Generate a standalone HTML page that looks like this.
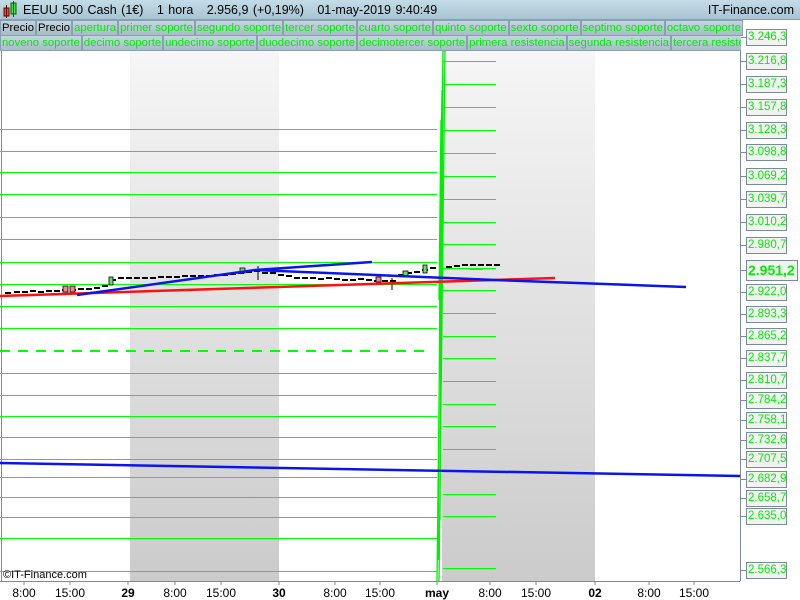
<!DOCTYPE html>
<html><head><meta charset="utf-8"><style>
*{margin:0;padding:0;box-sizing:border-box}
body{width:800px;height:600px;overflow:hidden;background:#fff;font-family:"Liberation Sans",sans-serif;position:relative}
#hdr{position:absolute;left:0;top:0;width:800px;height:20px;background:linear-gradient(#c4dce8,#a8c4d2);border-bottom:1px solid #8aa0ae}
#hdr .t{position:absolute;left:23px;top:3px;font-size:12.5px;color:#000;word-spacing:1px}
#hdr .r{position:absolute;right:6px;top:3px;font-size:12.5px}
.row{position:absolute;left:0;height:16px;display:flex;background:#a4bac6}
.row span{font-size:11.3px;color:#00ee00;padding:0 1px;border:1px solid #8aa0ae;background:linear-gradient(#c2d6e0,#a8bcc8);line-height:14px;white-space:nowrap}
.row span.k{color:#000}
.lb{position:absolute;left:746px;width:41px;height:17px;border:1px solid #7a8a99;background:#f2f2f2;color:#00ee00;font-size:11.5px;line-height:15px;text-align:left;padding-left:1px}
.h{position:absolute;height:1px;background:#00ff00}
</style></head><body>
<svg width="800" height="600" style="position:absolute;left:0;top:0">
<defs>
<linearGradient id="g" x1="0" y1="0" x2="0" y2="1"><stop offset="0" stop-color="#f6f6f6"/><stop offset="1" stop-color="#cbcbcb"/></linearGradient>
</defs>
<rect x="130" y="50" width="149" height="531" fill="url(#g)"/>
<rect x="442" y="50" width="153" height="531" fill="url(#g)"/>
<rect x="1" y="50" width="1" height="531" fill="#7a8a99"/>
<rect x="740" y="50" width="1" height="531" fill="#7a8a99"/>
<rect x="0" y="581" width="740" height="1" fill="#7a8a99"/>
<g fill="#00ff00">
<rect x="0" y="129" width="437" height="1"/><rect x="0" y="151" width="437" height="1"/><rect x="0" y="172" width="437" height="1"/><rect x="0" y="194" width="437" height="1"/><rect x="0" y="217" width="437" height="1"/><rect x="0" y="239" width="437" height="1"/><rect x="0" y="262" width="437" height="1"/><rect x="0" y="284" width="437" height="1"/><rect x="0" y="306" width="437" height="1"/><rect x="0" y="328" width="437" height="1"/><rect x="0" y="373" width="437" height="1"/><rect x="0" y="395" width="437" height="1"/><rect x="0" y="416" width="437" height="1"/><rect x="0" y="437" width="437" height="1"/><rect x="0" y="459" width="437" height="1"/><rect x="0" y="477" width="437" height="1"/><rect x="0" y="497" width="437" height="1"/><rect x="0" y="517" width="437" height="1"/><rect x="0" y="538" width="437" height="1"/><rect x="0" y="571" width="437" height="1"/>
<rect x="443" y="61" width="53" height="1"/><rect x="443" y="84" width="53" height="1"/><rect x="443" y="107" width="53" height="1"/><rect x="443" y="130" width="53" height="1"/><rect x="443" y="153" width="53" height="1"/><rect x="443" y="176" width="53" height="1"/><rect x="443" y="199" width="53" height="1"/><rect x="443" y="222" width="53" height="1"/><rect x="443" y="244" width="53" height="1"/><rect x="443" y="268" width="53" height="1"/><rect x="443" y="290" width="53" height="1"/><rect x="443" y="313" width="53" height="1"/><rect x="443" y="336" width="53" height="1"/><rect x="443" y="358" width="53" height="1"/><rect x="443" y="381" width="53" height="1"/><rect x="443" y="404" width="53" height="1"/><rect x="443" y="426" width="53" height="1"/><rect x="443" y="449" width="53" height="1"/><rect x="443" y="471" width="53" height="1"/><rect x="443" y="494" width="53" height="1"/><rect x="443" y="516" width="53" height="1"/><rect x="443" y="568" width="53" height="1"/>
<rect x="470" y="268" width="13" height="2"/>
</g>
<path d="M0 351H430" stroke="#00ff00" stroke-dasharray="10,8" stroke-width="2"/>
<g stroke="#00ee00" stroke-width="1.3" fill="none">
<path d="M437 581L443 50M439 581L445 50M438 560L441 120L439 300L442 90L440 520L443 60"/>
</g>
<g stroke="#000" stroke-width="2">
<path d="M5 293h6M14 292h6M22 292h6M30 291h6M38 292h6M46 291h6M54 291h6M62 290h6M70 290h6M78 289h6M86 289h6M94 288h6M102 286h6M110 280h6M118 278h6M126 278h6M134 278h6M142 278h6M150 278h6M158 277h6M166 277h6M174 277h6M182 276h6M190 276h6M198 276h6M206 276h6M214 275h6M222 275h6M230 274h6M238 273h6M246 272h6M254 271h6M262 273h6M270 273h6M278 275h6M286 276h6M294 278h6M302 278h6M310 278h6M318 279h6M326 278h6M334 279h6M342 280h6M350 280h6M358 279h6M366 280h6M374 281h6M382 281h6M390 281h6M398 275h6M406 273h6M414 272h6M422 270h6M430 268h6M446 267h6M454 266h6M462 265h6M470 265h6M478 265h6M486 265h6M494 265h6"/>
<path d="M392 278v12M258 266v14" stroke-width="1"/>
</g>
<g stroke="#000" stroke-width="0.8">
<rect x="63" y="286" width="5" height="6" fill="#e88"/><rect x="70" y="286" width="5" height="6" fill="#e88"/><rect x="109" y="277" width="4" height="8" fill="#6d6"/>
<rect x="240" y="268" width="5" height="5" fill="#6d6"/><rect x="376" y="277" width="5" height="5" fill="#e88"/><rect x="403" y="271" width="5" height="6" fill="#6d6"/><rect x="423" y="265" width="4" height="8" fill="#6d6"/>
</g>
<path d="M0 296L555 278" stroke="#ff1010" stroke-width="2.5"/>
<path d="M77 295L255 270L372 262L255 270L495 280L686 287" stroke="#0a14ee" stroke-width="2.5" fill="none"/>
<path d="M0 463L740 476" stroke="#0a14ee" stroke-width="2.5"/>
<g fill="#7a8a99"><rect x="741" y="37" width="5" height="1"/><rect x="741" y="61" width="5" height="1"/><rect x="741" y="84" width="5" height="1"/><rect x="741" y="107" width="5" height="1"/><rect x="741" y="130" width="5" height="1"/><rect x="741" y="152" width="5" height="1"/><rect x="741" y="176" width="5" height="1"/><rect x="741" y="199" width="5" height="1"/><rect x="741" y="222" width="5" height="1"/><rect x="741" y="245" width="5" height="1"/><rect x="741" y="270" width="5" height="1"/><rect x="741" y="292" width="5" height="1"/><rect x="741" y="314" width="5" height="1"/><rect x="741" y="336" width="5" height="1"/><rect x="741" y="358" width="5" height="1"/><rect x="741" y="380" width="5" height="1"/><rect x="741" y="400" width="5" height="1"/><rect x="741" y="420" width="5" height="1"/><rect x="741" y="440" width="5" height="1"/><rect x="741" y="459" width="5" height="1"/><rect x="741" y="479" width="5" height="1"/><rect x="741" y="498" width="5" height="1"/><rect x="741" y="516" width="5" height="1"/><rect x="741" y="570" width="5" height="1"/></g>
<g stroke="#7a8a99"><path d="M24 581v4M70 581v4M128 581v4M175 581v4M221 581v4M279 581v4M335 581v4M380 581v4M437 581v4M490 581v4M536 581v4M595 581v4M649 581v4M694 581v4"/></g>
<g font-size="12" font-family="Liberation Sans,sans-serif" text-anchor="middle" fill="#000">
<text x="24" y="597">8:00</text><text x="70" y="597">15:00</text><text x="128" y="597" font-weight="bold">29</text><text x="175" y="597">8:00</text><text x="221" y="597">15:00</text><text x="279" y="597" font-weight="bold">30</text><text x="335" y="597">8:00</text><text x="380" y="597">15:00</text><text x="437" y="597" font-weight="bold">may</text><text x="490" y="597">8:00</text><text x="536" y="597">15:00</text><text x="595" y="597" font-weight="bold">02</text><text x="649" y="597">8:00</text><text x="694" y="597">15:00</text>
</g>
<text x="3" y="578" font-size="11" fill="#000">©IT-Finance.com</text>
</svg>
<div id="hdr"><div class="t">EEUU 500 Cash (1€) &nbsp; 1 hora &nbsp; 2.956,9 (+0,19%) &nbsp; 01-may-2019 9:40:49</div><div class="r">IT-Finance.com</div></div>
<svg width="20" height="20" style="position:absolute;left:0;top:0"><rect x="4" y="8" width="5" height="8" fill="#e44" stroke="#600"/><line x1="6.5" y1="5" x2="6.5" y2="18" stroke="#600"/><rect x="11" y="3" width="5" height="11" fill="#4d4" stroke="#060"/><line x1="13.5" y1="1" x2="13.5" y2="17" stroke="#060"/></svg>
<div class="row" style="top:20px;width:740px"><span class="k">Precio</span><span class="k">Precio</span><span>apertura</span><span>primer soporte</span><span>segundo soporte</span><span>tercer soporte</span><span>cuarto soporte</span><span>quinto soporte</span><span>sexto soporte</span><span>septimo soporte</span><span>octavo soporte</span></div>
<div class="row" style="top:35px;width:741px;overflow:hidden"><span>noveno soporte</span><span>decimo soporte</span><span>undecimo soporte</span><span>duodecimo soporte</span><span>decimotercer soporte</span><span>primera resistencia</span><span>segunda resistencia</span><span>tercera resistencia</span></div>
<div class="lb" style="top:29px">3.246,3</div>
<div class="lb" style="top:53px">3.216,8</div>
<div class="lb" style="top:76px">3.187,3</div>
<div class="lb" style="top:99px">3.157,8</div>
<div class="lb" style="top:122px">3.128,3</div>
<div class="lb" style="top:144px">3.098,8</div>
<div class="lb" style="top:168px">3.069,2</div>
<div class="lb" style="top:191px">3.039,7</div>
<div class="lb" style="top:214px">3.010,2</div>
<div class="lb" style="top:237px">2.980,7</div>
<div class="lb" style="top:260px;width:52px;height:21px;font-size:14px;font-weight:bold;line-height:19px">2.951,2</div>
<div class="lb" style="top:284px">2.922,0</div>
<div class="lb" style="top:306px">2.893,3</div>
<div class="lb" style="top:328px">2.865,2</div>
<div class="lb" style="top:350px">2.837,7</div>
<div class="lb" style="top:372px">2.810,7</div>
<div class="lb" style="top:392px">2.784,2</div>
<div class="lb" style="top:412px">2.758,1</div>
<div class="lb" style="top:432px">2.732,6</div>
<div class="lb" style="top:451px">2.707,5</div>
<div class="lb" style="top:471px">2.682,9</div>
<div class="lb" style="top:490px">2.658,7</div>
<div class="lb" style="top:508px">2.635,0</div>
<div class="lb" style="top:562px">2.566,3</div>
</body></html>
